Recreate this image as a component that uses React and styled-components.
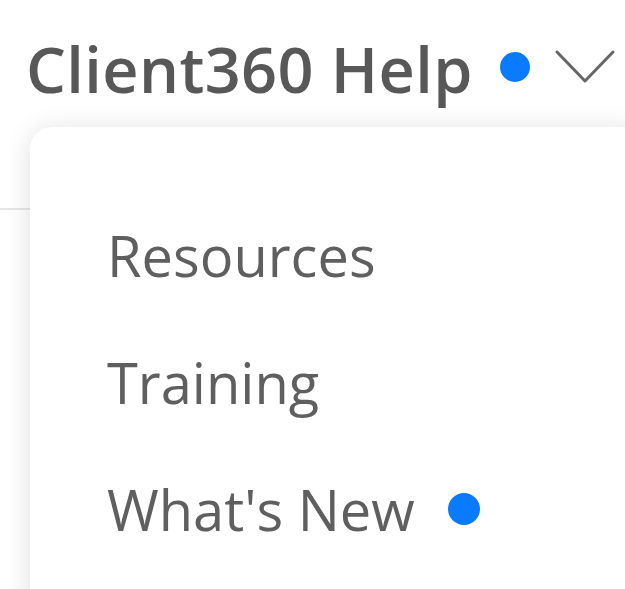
import React from "react";
import styled, { createGlobalStyle } from "styled-components";

const Global = createGlobalStyle`
  html, body { margin: 0; padding: 0; background: #ffffff; }
  body { font-family: "Open Sans", "Noto Sans", sans-serif; overflow: hidden; }
`;

const Page = styled.div`
  position: relative;
  width: 625px;
  height: 589px;
  overflow: hidden;
  background: #fff;
`;

const Header = styled.header`
  height: 210px;
  border-bottom: 2px solid #e6e6e6;
  box-sizing: border-box;
  display: flex;
  align-items: flex-start;
  padding: 29px 0 0 26px;
`;

const Trigger = styled.button`
  display: flex;
  align-items: center;
  background: none;
  border: 0;
  padding: 0;
  cursor: pointer;
  font-family: inherit;
`;

const Title = styled.span`
  font-size: 63px;
  font-weight: 600;
  color: #585858;
  line-height: 80px;
  letter-spacing: 0.4px;
`;

const Dot = styled.span`
  display: inline-block;
  width: ${(p) => p.$size}px;
  height: ${(p) => p.$size}px;
  border-radius: 50%;
  background: #0a7aff;
  margin-left: ${(p) => p.$gap}px;
  margin-top: ${(p) => p.$lift || 0}px;
  flex: none;
`;

const Chevron = styled.svg`
  width: 62px;
  height: 36px;
  margin-left: 24px;
  margin-top: -4px;
  flex: none;
`;

const Menu = styled.nav`
  position: absolute;
  left: 30px;
  top: 127px;
  width: 620px;
  height: 520px;
  background: #fff;
  border-radius: 22px;
  box-shadow: 0 2px 26px rgba(0, 0, 0, 0.13);
  display: flex;
  flex-direction: column;
  padding: 104px 0 0 77px;
  box-sizing: border-box;
`;

const Item = styled.a`
  display: flex;
  align-items: center;
  height: 127px;
  font-size: 56px;
  font-weight: 400;
  color: #5f5f5f;
  text-decoration: none;
  line-height: 1;
  margin-top: -40px;
  margin-bottom: 40px;
`;

export default function App() {
  return (
    <Page>
      <Global />
      <Header>
        <Trigger>
          <Title>Client360 Help</Title>
          <Dot $size={30} $gap={27} $lift={-5} />
          <Chevron viewBox="0 0 62 36" fill="none">
            <path d="M3 3 L31 32 L59 3" stroke="#666" strokeWidth="3" strokeLinecap="round" strokeLinejoin="round" />
          </Chevron>
        </Trigger>
      </Header>
      <Menu>
        <Item href="#">Resources</Item>
        <Item href="#">Training</Item>
        <Item href="#">
          What's New
          <Dot $size={32} $gap={33} />
        </Item>
      </Menu>
    </Page>
  );
}
